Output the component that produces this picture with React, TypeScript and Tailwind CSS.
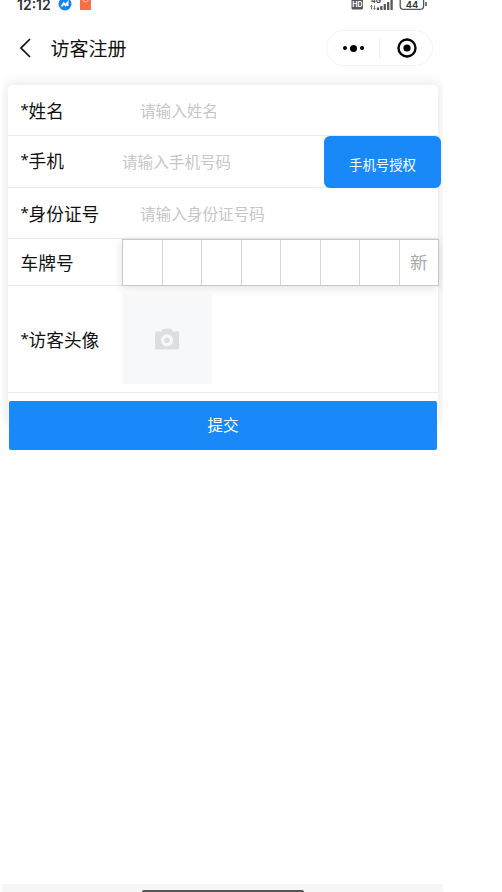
import React from 'react';

const StatusBar = () => (
    <div className="flex h-5 shrink-0 items-start justify-between pl-[15px] pr-[15px] text-[#333]">
        <div className="flex h-[12px] items-start">
            <span className="-mt-[3px] w-[35px] text-[14px] font-semibold leading-[16px] font-['Inter','Noto_Sans_CJK_SC',sans-serif]">12:12</span>
            <svg className="ml-[6px] -mt-[3px] h-[14px] w-[14px]" viewBox="0 0 14 14">
                <circle cx="7" cy="7" r="6.5" fill="#1485f5" />
                <path d="M3.600 9.500 5.800 6.200 7.500 8.200 9.600 5.500v3.500" fill="none" stroke="#fff" strokeWidth="1.800" />
            </svg>
            <svg className="ml-[8px] h-[10px] w-[11px]" viewBox="0 0 11 10">
                <path d="M0 0h11v10H0z" fill="#fb6c49" />
                <path d="M3 0c0 2.500 5 2.500 5 0" fill="none" stroke="#ffd0c0" strokeWidth="1" />
            </svg>
        </div>
        <svg className="h-[12px] w-[77px] overflow-visible" viewBox="0 0 77 12">
            <rect x="0.500" y="-2" width="11.500" height="11.500" rx="1.500" fill="#555" />
            <text x="1.200" y="7.200" fontSize="7" fontWeight="700" fill="#fff" fontFamily="Inter, sans-serif">HD</text>
            <text x="20" y="2.800" fontSize="7" fontWeight="700" fill="#444" fontFamily="Inter, sans-serif">4G</text>
            <path d="M20.500 5.500v4m-1-3 1-1 1 1M23.500 5.500v4m-1-1 1 1 1-1" fill="none" stroke="#555" strokeWidth="0.800" />
            <path d="M27 7.500v2.500M30.400 6V10M33.800 4V10M37.200 2V10M40.600 0V10" stroke="#555" strokeWidth="2.300" />
            <rect x="49.200" y="-4" width="23.400" height="13.300" rx="3.200" fill="none" stroke="#555" strokeWidth="1.300" />
            <text x="54.800" y="8" fontSize="9.500" fontWeight="600" fill="#333" fontFamily="Inter, sans-serif">44</text>
            <path d="M75 2v4" stroke="#555" strokeWidth="1.600" />
        </svg>
    </div>
);

const Header = () => (
    <div className="flex h-[65px] shrink-0 items-start pl-[17px] pr-[10px]">
        <svg className="mt-[18px] h-[20px] w-[12px]" viewBox="0 0 12 20">
            <path d="M11 1 2 10l9 9" fill="none" stroke="#111" strokeWidth="1.700" />
        </svg>
        <h1 className="ml-[19.500px] mt-[14px] text-[19px] leading-[28px] text-[#111]">访客注册</h1>
        <div className="ml-auto mt-[10px] flex h-[36px] w-[107px] items-center rounded-full border border-[#f3f3f3]">
            <div className="flex w-[52px] items-center justify-center gap-[3px]">
                <span className="size-[4px] rounded-full bg-black" />
                <span className="size-[7px] rounded-full bg-black" />
                <span className="size-[4px] rounded-full bg-black" />
            </div>
            <span className="h-[21px] w-px bg-[#eee]" />
            <svg className="ml-[17px] h-5 w-5" viewBox="0 0 20 20">
                <circle cx="10" cy="10" r="8.500" fill="none" stroke="#000" strokeWidth="2.400" />
                <circle cx="10" cy="10" r="3.600" />
            </svg>
        </div>
    </div>
);

interface LabelProps {
    required?: boolean;
    children: React.ReactNode;
}

const Label = ({ required, children }: LabelProps) => (
    <label className="flex w-[114px] shrink-0 items-center pl-[12.500px] text-[17.7px] leading-[26px] text-[#111]">
        {required && <span className="-mt-[3px] w-[8px] font-['Noto_Sans',sans-serif] text-[15px]">*</span>}
        {children}
    </label>
);

const inputClass = 'min-w-0 flex-1 bg-transparent text-[15.6px] outline-none placeholder:text-[#c6c6c6]';

const plateCells = ['', '', '', '', '', '', '', '新'];

const App = () => {
    return (
        <div className="flex h-[892px] w-[502px] bg-white pl-[2px] font-['Noto_Sans_CJK_SC',sans-serif]">
            <div className="flex h-full w-[441px] flex-col overflow-hidden">
                <StatusBar />
                <Header />

                <form className="mx-[6px] h-[338px] w-[430px] shrink-0 rounded-[5px] shadow-[0_0_12px_3px_rgba(0,0,0,0.08)]">
                    <div className="flex h-[51px] items-center border-b border-[#ececec]">
                        <Label required>姓名</Label>
                        <input className={`${inputClass} pl-[18px] pt-[2px]`} placeholder="请输入姓名" />
                    </div>

                    <div className="flex h-[52px] items-center border-b border-[#ececec]">
                        <div className="-mt-[3px]">
                            <Label required>手机</Label>
                        </div>
                        <input className={inputClass} placeholder="请输入手机号码" />
                        <button type="button" className="-mr-[3px] mt-px h-[52px] w-[117px] shrink-0 rounded-[6px] bg-[#1989fa] pt-[5px] text-[13.4px] text-white">
                            手机号授权
                        </button>
                    </div>

                    <div className="flex h-[51px] items-center border-b border-[#ececec]">
                        <Label required>身份证号</Label>
                        <input className={`${inputClass} pl-[18px] pt-[2px]`} placeholder="请输入身份证号码" />
                    </div>

                    <div className="flex h-[47px] items-center border-b border-[#ececec]">
                        <Label>车牌号</Label>
                        <div className="-mr-px flex h-[47px] flex-1 border border-[#c8c8c8] shadow-[0_2px_10px_rgba(0,0,0,0.12)]">
                            {plateCells.map((cell, i) => (
                                <div key={i} className="flex flex-1 items-center justify-center border-r border-[#d6d6d6] text-[17.6px] text-[#aaa] last:border-r-0">
                                    {cell}
                                </div>
                            ))}
                        </div>
                    </div>

                    <div className="flex h-[107px] items-center border-b border-[#ececec]">
                        <Label required>访客头像</Label>
                        <div className="flex h-[90px] w-[90px] items-center justify-center bg-[#f7f8fa]">
                            <svg className="h-[22px] w-[24px]" viewBox="0 0 24 22">
                                <path fillRule="evenodd" d="M1.200 3.600H6L8 .8h8l2 2.800h4.800q1.200 0 1.200 1.200v15.400q0 1.200-1.200 1.200H1.200Q0 21.400 0 20.200V4.800Q0 3.600 1.200 3.600ZM12 6.300a6 6 0 1 0 0 12 6 6 0 0 0 0-12Zm0 3.200a2.800 2.800 0 1 1 0 5.600 2.800 2.800 0 0 1 0-5.600Z" fill="#dcdee0" />
                            </svg>
                        </div>
                    </div>

                    <button type="button" className="mx-px mt-[8px] h-[49px] w-[428px] rounded-[2px] bg-[#1989fa] pb-[2px] text-[15.6px] text-white">
                        提交
                    </button>
                </form>

                <div className="mt-auto flex h-[8px] shrink-0 justify-center bg-[#f6f6f6] pt-[6px]">
                    <div className="h-[2px] w-[162px] rounded-t-[2px] bg-[#555]" />
                </div>
            </div>
        </div>
    );
};

export default App;
